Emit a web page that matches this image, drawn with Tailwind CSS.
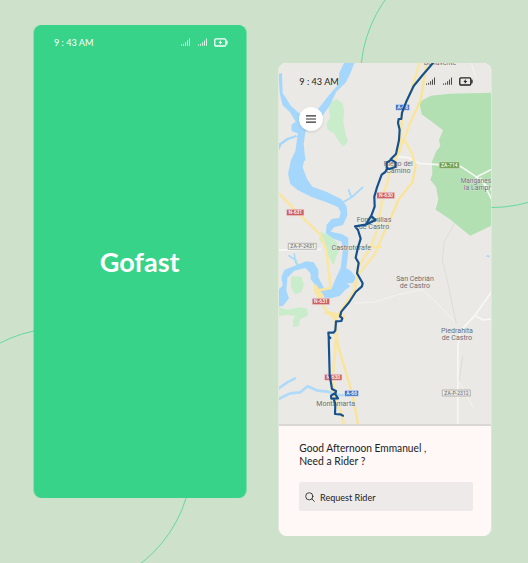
<!DOCTYPE html>
<html lang="en">
<head>
<meta charset="utf-8">
<title>Gofast</title>
<script src="https://cdn.jsdelivr.net/npm/@tailwindcss/browser@4"></script>
</head>
<body class="relative h-[563px] w-[528px] overflow-hidden bg-[#cee1cb] font-[Lato,Inter,sans-serif]">
<svg class="absolute inset-0" width="528" height="563" fill="none" stroke="#64d9a0" stroke-width="1">
  <circle cx="60.6" cy="459.5" r="131.3"/><circle cx="492" cy="76.2" r="131.3"/>
</svg>
<svg class="hidden">
  <symbol id="signal" viewBox="0 0 9 8"><path d="M.5 6.500v1.300M2.600 5.800v2M4.600 4.200v3.600M6.500 2.500v5.300M8.500 .5v7.300" stroke="currentColor" stroke-width=".8"/></symbol>
  <symbol id="battery" viewBox="0 0 14 9"><rect x=".8" y=".8" width="11" height="7.200" rx="1.100" fill="none" stroke="currentColor" stroke-width="1.300"/><path d="M12.300 2.400h.6q.7 0 .7.700v2.600q0 .7-.7.700h-.6z" fill="currentColor"/><path d="M6.800 2L4.400 4.900h1.500L5.700 7 8.300 4H6.700z" fill="currentColor"/></symbol>
</svg>
<main class="relative flex items-start gap-[33px] pl-[34px] pt-[25px]">
  <section class="flex h-[473px] w-[212px] flex-col rounded-lg bg-[#37d388] text-white shadow-[-1px_0_0_#37d38866,1px_0_0_#37d38880]">
    <header class="flex h-[34px] items-center justify-between pl-[20px] pr-[18px]">
      <svg width="42" height="12" class="block overflow-visible text-[10px]"><text x="0" y="9.600" textLength="39.500" lengthAdjust="spacingAndGlyphs" fill="currentColor">9 : 43 AM</text></svg>
      <div class="flex items-center"><svg width="9" height="8" class="mr-2"><use href="#signal"/></svg><svg width="9" height="8" class="mr-[7px]"><use href="#signal"/></svg><svg width="14" height="9"><use href="#battery"/></svg></div>
    </header>
    <h1 class="pt-[187px]"><svg width="212" height="34" class="block"><text x="65.700" y="26.100" textLength="80" lengthAdjust="spacingAndGlyphs" class="text-[26px] font-bold" fill="currentColor">Gofast</text></svg></h1>
  </section>

  <section class="relative mt-[38px] flex h-[473px] w-[212px] flex-col overflow-hidden rounded-lg bg-[#fff8f7] text-[#222] shadow-[-1px_0_0_#f3f3ee80,1px_0_0_#f3f3ee66]">
    <svg class="block h-[363px] w-[212px] shrink-0" viewBox="9 189 636 1089" preserveAspectRatio="none" fill="none" stroke-linecap="round" stroke-linejoin="round">
      <rect x="7" y="189" width="640" height="1090" fill="#eae9e5"/>
      <!-- woodland -->
      <g fill="#c9edca">
        <path d="M181 297L199 309 205 333 202 363 207 395 216 425 202 440 185 419 175 401 155 389 151 371 163 350 158 330 164 307Z"/>
        <path d="M132 696L163 707 184 729 187 755 172 796 159 771 147 740 130 719Z"/>
        <path d="M46 829L76 830 84 854 76 877 57 883 44 860Z"/>
        <path d="M7 922L34 929 70 922 93 926 97 946 72 957 69 979 51 981 51 960 58 949 36 944 7 948Z"/>
        <path d="M57 770L68 791 82 800 62 799Z"/>
      </g>
      <path d="M430 305L465 287 520 281 647 278V676L615 692 583 707 549 680 521 657 479 629 487 597 480 560 463 540 469 523 468 485 480 455 493 438 489 420 501 391 473 369 437 343Z" fill="#b2e0b2"/>
      <!-- water -->
      <g fill="#a5d7fc">
        <path d="M204 189H235L224 218 210 247 181 275 160 319 137 350 110 377 88 397 83 432 87 472 80 502 93 537 109 560 151 575 195 597 212 619 214 646 201 675 174 682 164 695 198 702 217 714 217 755 211 805 225 813 241 834 230 849 213 850 223 859 207 870 192 887 166 895 148 894 133 881 136 868 167 865 179 836 194 803 200 755 197 725 173 716 149 700 152 674 168 656 190 654 194 637 186 621 151 607 107 591 66 571 43 552 36 521 45 480 58 454 64 410 72 367 124 330 154 292 188 252 190 218Z"/>
        <path d="M7 221L18 220 20 279 45 318 79 348 72 403 47 393 46 374 59 365 42 337 20 316 12 285Z"/>
        <path d="M64 410L37 420 17 434 7 456V432L31 415 60 405Z"/>
        <path d="M129 868L105 839 103 819 88 804 55 812 34 833 31 872 39 895 21 918 7 920V869L20 857 16 831 25 810 56 797 91 784 113 787 127 809 127 832 145 866Z"/>
      </g>
      <g stroke="#a5d7fc">
        <path d="M192 612L227 592 260 562M226 592L218 569M82 470L86 480" stroke-width="5"/>
        <path d="M55 762L58 786 65 795M38 767L62 782M80 480L87 474" stroke-width="4"/>
        <path d="M7 1197L42 1180 73 1177 95 1159 126 1172 156 1175 188 1185 221 1187M7 1166L34 1147 57 1135" stroke-width="8" opacity=".85"/>
        <path d="M633 768L639 769" stroke-width="5"/>
      </g>
      <!-- roads -->
      <g stroke="#f7f7f4" stroke-width="5">
        <path d="M358 470L397 473 430 490 475 493 555 500 600 530 647 570M600 532L647 508M615 535L647 598M7 750L135 748M647 875L597 946 554 992 546 1035 545 1278M597 947L622 960 647 957"/>
        <path d="M237 910L300 905 365 884 438 869 490 916 535 964M583 180L600 235M550 1146L590 1220" stroke-width="2"/>
      </g>
      <path d="M534 672L505 725 499 780 518 860 540 967M560 1070L550 1140" stroke="#dcdcd9" stroke-width="3"/>
      <g stroke="#fae6a0" stroke-width="7.500">
        <path d="M431 189L408 265 378 346 373 450 345 505 321 590 300 700 283 743 247 801 237 870 180 953 178 1050 171 1120 174 1190 195 1235 205 1278"/>
        <path d="M452 189L434 300 401 371 384 417 407 458 419 500 409 547 367 600 346 650 317 713 295 765 242 828 235 873"/>
        <path d="M7 578L62 635 133 704 151 749 157 802 164 864 117 873 147 927 180 960 184 1030 208 1110 231 1190 247 1278"/>
        <path d="M384 417L358 470M260 741H315"/>
        <path d="M118 860L138 889M152 938L202 950" stroke-width="12"/>
      </g>
      <path d="M452 189L434 300 401 371M419 500L409 547 367 600 346 650 317 713M184 1030L231 1190 247 1278" stroke="#f8dd86" stroke-width="1.500"/>
      <!-- road shields -->
      <g stroke-width="2">
        <rect x="359" y="313" width="42" height="18" fill="#4375c2" stroke="#eef"/>
        <rect x="206" y="1171" width="42" height="18" fill="#4375c2" stroke="#eef"/>
        <rect x="490" y="486" width="60" height="19" fill="#6e9e49" stroke="#cdddb9"/>
        <rect x="303" y="577" width="53" height="19" fill="#cd6060" stroke="#efdada"/>
        <rect x="32" y="628" width="52" height="19" fill="#cd6060" stroke="#efdada"/>
        <rect x="109" y="895" width="52" height="19" fill="#cd6060" stroke="#efdada"/>
        <rect x="146" y="1123" width="52" height="18" fill="#cd6060" stroke="#efdada"/>
        <rect x="38" y="730" width="83" height="18" fill="#efefec" stroke="#999"/>
        <rect x="500" y="1170" width="83" height="18" fill="#efefec" stroke="#999"/>
      </g>
      <g class="font-[Roboto,sans-serif] font-medium" font-size="15" text-anchor="middle" fill="#fff">
        <text x="380" y="328">A-66</text><text x="227" y="1185.500">A-66</text><text x="520" y="501">ZA-714</text>
        <text x="330" y="592">N-630</text><text x="58" y="643">N-631</text><text x="135" y="910">N-631</text><text x="172" y="1137.500">N-630</text>
        <text x="79.500" y="745" fill="#777">ZA-P-2431</text><text x="541.500" y="1185" fill="#777">ZA-P-2312</text>
      </g>
      <!-- places -->
      <g class="font-[Roboto,sans-serif]" font-size="21.500" text-anchor="middle" fill="#6a6c72" stroke="#f0f0ed" stroke-width="1.500" paint-order="stroke">
        <text x="492" y="195" textLength="97" lengthAdjust="spacingAndGlyphs">Benavente</text>
        <text x="367" y="497" textLength="87" lengthAdjust="spacingAndGlyphs">Riego del</text><text x="367" y="518" textLength="73" lengthAdjust="spacingAndGlyphs">Camino</text>
        <text x="599.500" y="548" textLength="91" lengthAdjust="spacingAndGlyphs">Manganes</text><text x="604" y="569" textLength="81" lengthAdjust="spacingAndGlyphs">la Lampr</text>
        <text x="294" y="666" textLength="104" lengthAdjust="spacingAndGlyphs">Fontanillas</text><text x="294" y="687" textLength="92" lengthAdjust="spacingAndGlyphs">de Castro</text>
        <text x="226" y="749" textLength="119" lengthAdjust="spacingAndGlyphs">Castrotorafe</text>
        <text x="417" y="844" textLength="113" lengthAdjust="spacingAndGlyphs">San Cebrián</text><text x="417" y="865" textLength="91" lengthAdjust="spacingAndGlyphs">de Castro</text>
        <text x="543" y="999" textLength="96" lengthAdjust="spacingAndGlyphs">Piedrahita</text><text x="543" y="1020" textLength="91" lengthAdjust="spacingAndGlyphs">de Castro</text>
        <text x="179" y="1219" textLength="116" lengthAdjust="spacingAndGlyphs">Montamarta</text>
      </g>
      <!-- route -->
      <path d="M471 189L440 225 413 258 390 307 378 338 376 357H368L366 369 371 389 369 420 360 462 344 478 359 487 358 501 340 507 332 503 332 488 345 480M334 504L328 516 317 524 303 562 295 590 296 620 286 647 269 674 299 660 286 648M269 674L237 679 246 690 254 716 246 742 239 773 248 789 243 820 260 850 258 859 239 876 220 906 196 935 192 949 199 955 196 963 180 964 178 991 173 998H157L158 1009 163 1014M158 1009L161 1125 168 1167 180 1173 178 1183 186 1195 166 1196 165 1187 178 1179M173 1196L178 1213 177 1242 193 1243 201 1247" stroke="#17518c" stroke-width="6.500"/>
      <rect x="7" y="1272" width="640" height="6" fill="#d9d7d3"/>
    </svg>
    <header class="absolute inset-x-0 top-0 flex h-[36px] items-center justify-between pl-[20px] pr-[18px]">
      <svg width="42" height="12" class="block overflow-visible text-[10px]"><text x="0.300" y="9.600" textLength="39.500" lengthAdjust="spacingAndGlyphs" fill="currentColor">9 : 43 AM</text></svg>
      <div class="flex items-center"><svg width="9" height="8" class="mr-2"><use href="#signal"/></svg><svg width="9" height="8" class="mr-[7px]"><use href="#signal"/></svg><svg width="14" height="9"><use href="#battery"/></svg></div>
    </header>
    <button class="absolute left-[20px] top-[44px] flex size-6 items-center justify-center rounded-full bg-white shadow-sm" aria-label="Menu">
      <svg width="12" height="8" stroke="#303030" stroke-width="1.200"><path d="M1 .8h10M1 4h10M1 7.200h10"/></svg>
    </button>
    <div class="flex flex-col px-[20px] pt-[15px]">
      <svg width="172" height="28" class="block overflow-visible text-[10.500px]" fill="currentColor"><text x="0.300" y="11.200" textLength="127" lengthAdjust="spacingAndGlyphs">Good Afternoon Emmanuel ,</text><text x="0.300" y="23.600" textLength="66" lengthAdjust="spacingAndGlyphs">Need a Rider ?</text></svg>
      <div class="mt-[13px] flex h-[29px] w-[174px] items-center rounded-[2px] bg-[#edeae9] pl-[6px]">
        <svg width="10" height="10" fill="none" stroke="#303030" stroke-width=".9" stroke-linecap="round"><circle cx="4.300" cy="4.300" r="3.600"/><path d="M7 7l2.400 2.400"/></svg>
        <svg width="80" height="14" class="ml-[5px] block text-[9px]" fill="currentColor"><text x="0" y="10.600" textLength="55.500" lengthAdjust="spacingAndGlyphs">Request Rider</text></svg>
      </div>
    </div>
  </section>
</main>
</body>
</html>
